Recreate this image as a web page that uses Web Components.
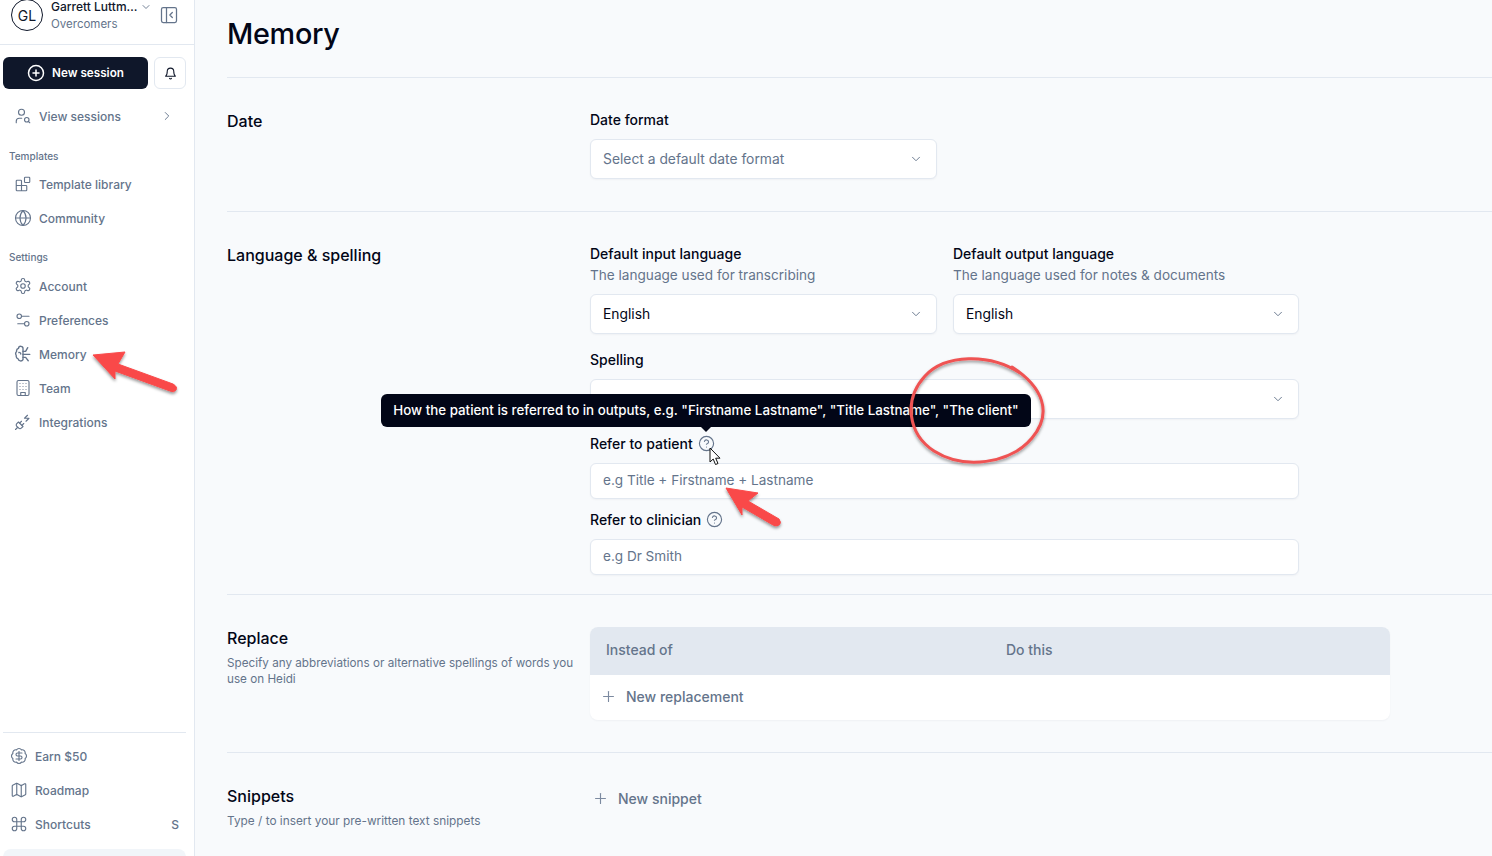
<!DOCTYPE html>
<html lang="en">
<head>
<meta charset="utf-8">
<title>Memory</title>
<style>
html,body{margin:0;padding:0;height:856px;overflow:hidden;background:#f8fafc;font-family:Inter,"Liberation Sans",sans-serif;color:#020617}
</style>
</head>
<body>
<app-shell>
  <side-bar slot="side"></side-bar>
  <page-title>Memory</page-title>
  <settings-section heading="Date" pad="33 32">
    <form-field label="Date format"><select-box placeholder text="Select a default date format"></select-box></form-field>
  </settings-section>
  <settings-section heading="Language &amp; spelling" pad="33 19">
    <form-field label="Default input language" hint="The language used for transcribing"><select-box text="English"></select-box></form-field>
    <form-field label="Default output language" hint="The language used for notes &amp; documents"><select-box text="English"></select-box></form-field>
    <form-field wide label="Spelling"><select-box text=""></select-box></form-field>
    <form-field wide help up label="Refer to patient"><text-box text="e.g Title + Firstname + Lastname"></text-box></form-field>
    <form-field wide help tight label="Refer to clinician"><text-box text="e.g Dr Smith"></text-box></form-field>
  </settings-section>
  <settings-section heading="Replace" hint="Specify any abbreviations or alternative spellings of words you use on Heidi" pad="32 32" top="1">
    <replace-table></replace-table>
  </settings-section>
  <settings-section heading="Snippets" hint="Type / to insert your pre-written text snippets" hintsize="11.85" pad="32 0" top="1" last>
    <add-row text="New snippet"></add-row>
  </settings-section>
  <page-annotations slot="over"></page-annotations>
</app-shell>
<script>
const ICONS={
 panel:'<rect x="3" y="3" width="18" height="18" rx="2"/><path d="M9 3v18"/><path d="m16 15-3-3 3-3"/>',
 bell:'<path d="M10.3 21a1.94 1.94 0 0 0 3.4 0"/><path d="M6 8a6 6 0 0 1 12 0c0 7 3 9 3 9H3s3-2 3-9"/>',
 plus:'<path d="M5 12h14"/><path d="M12 5v14"/>',
 circleplus:'<circle cx="12" cy="12" r="10"/><path d="M8 12h8"/><path d="M12 8v8"/>',
 usersearch:'<circle cx="10" cy="7" r="4"/><path d="M10.3 15H7a4 4 0 0 0-4 4v2"/><circle cx="17" cy="17" r="3"/><path d="m21 21-1.9-1.9"/>',
 blocks:'<rect x="14" y="3" width="7" height="7" rx="1"/><path d="M10 21V8a1 1 0 0 0-1-1H4a1 1 0 0 0-1 1v12a1 1 0 0 0 1 1h12a1 1 0 0 0 1-1v-5a1 1 0 0 0-1-1H3"/>',
 globe:'<circle cx="12" cy="12" r="10"/><path d="M12 2a14.5 14.5 0 0 0 0 20 14.5 14.5 0 0 0 0-20"/><path d="M2 12h20"/>',
 cog:'<path d="M12.22 2h-.44a2 2 0 0 0-2 2v.18a2 2 0 0 1-1 1.73l-.43.25a2 2 0 0 1-2 0l-.15-.08a2 2 0 0 0-2.73.73l-.22.38a2 2 0 0 0 .73 2.73l.15.1a2 2 0 0 1 1 1.72v.51a2 2 0 0 1-1 1.74l-.15.09a2 2 0 0 0-.73 2.73l.22.38a2 2 0 0 0 2.73.73l.15-.08a2 2 0 0 1 2 0l.43.25a2 2 0 0 1 1 1.73V20a2 2 0 0 0 2 2h.44a2 2 0 0 0 2-2v-.18a2 2 0 0 1 1-1.73l.43-.25a2 2 0 0 1 2 0l.15.08a2 2 0 0 0 2.73-.73l.22-.39a2 2 0 0 0-.73-2.73l-.15-.08a2 2 0 0 1-1-1.74v-.5a2 2 0 0 1 1-1.74l.15-.09a2 2 0 0 0 .73-2.73l-.22-.38a2 2 0 0 0-2.73-.73l-.15.08a2 2 0 0 1-2 0l-.43-.25a2 2 0 0 1-1-1.73V4a2 2 0 0 0-2-2z"/><circle cx="12" cy="12" r="3"/>',
 sliders:'<path d="M20 7h-9"/><path d="M14 17H5"/><circle cx="17" cy="17" r="3"/><circle cx="7" cy="7" r="3"/>',
 brain:'<path d="M12 5a3 3 0 0 0-6-.5 3.500 3.500 0 0 0-2.500 4A4.500 4.500 0 0 0 3 14a4 4 0 0 0 2.500 4.500 3.500 3.500 0 0 0 6.500 1V5"/><path d="M12 12.500h9"/><path d="M12 8.500h3.500l2.800-5"/><path d="M12 16.500h3.500l3.500 4.500"/><path d="M6.500 10a2 2 0 0 1 2.500 2"/>',
 building:'<rect x="4" y="2" width="16" height="20" rx="2"/><path d="M9 22v-4h6v4"/><path d="M8 6h.01M16 6h.01M12 6h.01M12 10h.01M12 14h.01M16 10h.01M16 14h.01M8 10h.01M8 14h.01"/>',
 plug:'<path d="M6.3 20.3a2.4 2.4 0 0 0 3.4 0L12 18l-6-6-2.3 2.3a2.4 2.4 0 0 0 0 3.4Z"/><path d="m2 22 3-3"/><path d="M7.5 13.5 10 11"/><path d="M10.5 16.5 13 14"/><path d="m18 3-4 4h6l-4 4"/>',
 dollar:'<path d="M3.85 8.62a4 4 0 0 1 4.78-4.77 4 4 0 0 1 6.74 0 4 4 0 0 1 4.78 4.78 4 4 0 0 1 0 6.74 4 4 0 0 1-4.77 4.78 4 4 0 0 1-6.75 0 4 4 0 0 1-4.78-4.77 4 4 0 0 1 0-6.76Z"/><path d="M16 8h-6a2 2 0 1 0 0 4h4a2 2 0 1 1 0 4H8"/><path d="M12 18V6"/>',
 map:'<path d="M14.106 5.553a2 2 0 0 0 1.788 0l3.659-1.83A1 1 0 0 1 21 4.619v12.764a1 1 0 0 1-.553.894l-4.553 2.277a2 2 0 0 1-1.788 0l-4.212-2.106a2 2 0 0 0-1.788 0l-3.659 1.83A1 1 0 0 1 3 19.381V6.618a1 1 0 0 1 .553-.894l4.553-2.277a2 2 0 0 1 1.788 0z"/><path d="M15 5.764v15"/><path d="M9 3.236v15"/>',
 command:'<path d="M15 6v12a3 3 0 1 0 3-3H6a3 3 0 1 0 3 3V6a3 3 0 1 0-3 3h12a3 3 0 1 0-3-3"/>',
 help:'<circle cx="12" cy="12" r="10"/><path d="M9.09 9a3 3 0 0 1 5.83 1c0 2-3 3-3 3"/><path d="M12 17h.01"/>',
 down:'<path d="m6 9 6 6 6-6"/>',
 right:'<path d="m9 18 6-6-6-6"/>'
};
function def(name,css,html,init){
  customElements.define(name,class extends HTMLElement{
    connectedCallback(){
      if(this.shadowRoot)return;
      const r=this.attachShadow({mode:'open'});
      r.innerHTML='<style>'+css+'</style>'+(typeof html==='function'?html(this):html);
      if(init)init(this,r);
    }
  });
}
const esc=s=>(s||'').replace(/&/g,'&amp;').replace(/</g,'&lt;');
def('x-icon',':host{display:inline-flex;flex:none;line-height:0}svg{display:block}',el=>{
  const s=el.getAttribute('size')||16,w=el.getAttribute('sw')||2;
  return `<svg width="${s}" height="${s}" viewBox="0 0 24 24" fill="none" stroke="currentColor" stroke-width="${w}" stroke-linecap="round" stroke-linejoin="round">${ICONS[el.getAttribute('name')]}</svg>`;
});
def('app-shell',`:host{display:flex;height:856px;overflow:hidden;position:relative}
 .main{flex:1;min-width:0;padding-left:32px;box-sizing:border-box;height:856px;overflow:hidden}`,
 '<slot name="side"></slot><div class="main"><slot></slot></div><slot name="over"></slot>');
def('nav-item',`:host{display:flex;align-items:center;height:34px;padding-left:var(--nav-pad,14px);padding-right:var(--nav-right,20px);gap:7px;color:#64748b;font-size:12px;font-weight:450}
 .t{flex:1;white-space:nowrap}.k{font-size:12px}`,
 el=>`<x-icon name="${el.getAttribute('icon')}" size="18" sw="${el.getAttribute('icon')==='brain'?1.8:1.5}"></x-icon><span class="t"><slot></slot></span>${el.hasAttribute('chev')?'<x-icon name="right" size="14" sw="1.6"></x-icon>':''}${el.getAttribute('key')?`<span class="k">${el.getAttribute('key')}</span>`:''}`);
def('side-label',':host{display:block;font-size:10px;font-weight:450;color:#64748b;padding-left:9px;height:13px;line-height:13px}','<slot></slot>');
def('side-bar',`:host{display:flex;flex-direction:column;width:195px;flex:none;height:856px;box-sizing:border-box;background:#fff;border-right:1px solid #e2e8f0;overflow:hidden}
 .head{height:45px;box-sizing:border-box;border-bottom:1px solid #e2e8f0;display:flex;align-items:flex-start;padding:0 0 0 11px;flex:none}
 .av{width:30px;height:30px;border:1px solid #0f172a;border-radius:50%;display:flex;align-items:center;justify-content:center;font-size:14px;color:#0f172a;margin-top:-1px;flex:none;background:#fff}
 .who{margin-left:8px;width:87px;flex:none;margin-top:-1px}
 .n{font-size:12px;font-weight:500;color:#0f172a;line-height:16px;white-space:nowrap}
 .o{font-size:11.5px;color:#64748b;line-height:16px;margin-top:1px}
 .cv{color:#64748b;margin:1px 0 0 2px}
 .pn{color:#64748b;margin:5px 0 0 7px}
 .act{display:flex;gap:6px;margin:12px 8px 0 3px;flex:none}
 .new{flex:1;height:32px;border-radius:6px;background:#0f172a;color:#fff;display:flex;align-items:center;justify-content:center;gap:7px;font-size:11.7px;font-weight:600}
 .bell{width:30px;height:30px;border:1px solid #e2e8f0;border-radius:6px;display:flex;align-items:center;justify-content:center;background:#fff;color:#0f172a;flex:none}
 .mt11{margin-top:10px}.lab{margin-top:17px;margin-bottom:4px}.lab2{margin-top:16px;margin-bottom:5px}
 .rule{height:1px;background:#e2e8f0;margin:auto 8px 6px 3px;flex:none}
 .foot{--nav-pad:10px;--nav-right:15px}
 .card{height:24px;margin:8px 8px -17px 3px;border-radius:8px;background:#f1f5f9;flex:none}`,
 `<div class="head"><div class="av">GL</div><div class="who"><div class="n">Garrett Luttm…</div><div class="o">Overcomers</div></div><x-icon class="cv" name="down" size="12" sw="1.8"></x-icon><x-icon class="pn" name="panel" size="20" sw="1.5"></x-icon></div>
 <div class="act"><div class="new"><x-icon name="circleplus" size="18" sw="2"></x-icon>New session</div><div class="bell"><x-icon name="bell" size="13" sw="2"></x-icon></div></div>
 <nav-item class="mt11" icon="usersearch" chev>View sessions</nav-item>
 <side-label class="lab">Templates</side-label>
 <nav-item icon="blocks">Template library</nav-item>
 <nav-item icon="globe">Community</nav-item>
 <side-label class="lab2">Settings</side-label>
 <nav-item icon="cog">Account</nav-item>
 <nav-item icon="sliders">Preferences</nav-item>
 <nav-item icon="brain">Memory</nav-item>
 <nav-item icon="building">Team</nav-item>
 <nav-item icon="plug">Integrations</nav-item>
 <div class="rule"></div>
 <div class="foot"><nav-item icon="dollar">Earn $50</nav-item><nav-item icon="map">Roadmap</nav-item><nav-item icon="command" key="S">Shortcuts</nav-item></div>
 <div class="card"></div>`);
def('page-title',`:host{display:block;height:78px;box-sizing:border-box;border-bottom:1px solid #e2e8f0;font-size:28.800px;font-weight:500;color:#020617;line-height:36px;padding-top:16px;letter-spacing:-.01em}`,'<slot></slot>');
def('settings-section',`:host{display:grid;grid-template-columns:347px 800px;column-gap:16px;box-sizing:border-box;border-bottom:1px solid #e2e8f0}
 :host([last]){border-bottom:0}
 .l{min-width:0}
 h2{margin:0;font-size:16px;font-weight:500;line-height:20px;color:#020617}
 p{margin:7px 0 0;font-size:11.7px;line-height:16px;color:#64748b}
 .r{display:grid;grid-template-columns:347px 346px;column-gap:16px;row-gap:17px;align-content:start}
 ::slotted(replace-table),::slotted(add-row){grid-column:1/-1}`,
 el=>{const h=el.getAttribute('hint'),z=el.getAttribute('hintsize');return `<div class="l"><h2>${esc(el.getAttribute('heading'))}</h2>${h?`<p${z?` style="font-size:${z}px"`:''}>${esc(h)}</p>`:''}</div><div class="r"><slot></slot></div>`},
 (el,r)=>{const [t,b]=(el.getAttribute('pad')||'32 32').split(' ');el.style.paddingTop=t+'px';el.style.paddingBottom=b+'px';
   r.querySelector('.l').style.paddingTop=(el.getAttribute('top')||0)+'px';});
def('form-field',`:host{display:block;min-width:0}
 :host([wide]){grid-column:1/-1}
 :host([tight]){margin-top:-5px}
 :host([up]){margin-top:-1px}
 .lb{display:flex;align-items:center;gap:5px;font-size:14px;font-weight:500;line-height:17px;color:#020617;height:17px}
 .h{font-size:13.600px;line-height:17px;color:#64748b;margin:5px 0 -1px}
 .lb x-icon{color:#64748b}
 .c{margin-top:11px}`,
 el=>`<div class="lb">${esc(el.getAttribute('label'))}${el.hasAttribute('help')?'<x-icon name="help" size="17" sw="1.6"></x-icon>':''}</div>${el.getAttribute('hint')?`<div class="h">${esc(el.getAttribute('hint'))}</div>`:''}<div class="c"><slot></slot></div>`);
def('select-box',`:host{display:flex;align-items:center;height:40px;box-sizing:border-box;background:#fff;border:1px solid #e2e8f0;border-radius:6px;padding:0 13px 0 12px;font-size:13.850px;color:#020617;box-shadow:0 1px 2px rgba(15,23,42,.04)}
 :host([placeholder]){color:#64748b}
 span{flex:1}x-icon{color:#64748b}`,
 el=>`<span>${esc(el.getAttribute('text'))}</span><x-icon name="down" size="14" sw="1.6"></x-icon>`);
def('text-box',`:host{display:flex;align-items:center;height:36px;box-sizing:border-box;background:#fff;border:1px solid #e2e8f0;border-radius:6px;padding:0 12px 2px;font-size:13.550px;color:#64748b;box-shadow:0 1px 2px rgba(15,23,42,.04)}`,
 el=>esc(el.getAttribute('text')));
def('replace-table',`:host{display:block;width:800px;border-radius:8px;overflow:hidden;background:#fff;box-shadow:0 1px 2px rgba(15,23,42,.04)}
 .h{display:grid;grid-template-columns:400px 400px;height:48px;box-sizing:border-box;padding-bottom:3px;align-items:center;background:#e2e8f0;color:#64748b;font-size:14px;font-weight:500}
 .h div{padding-left:16px}
 add-row{height:45px;box-sizing:border-box;padding:0 0 2px 10px}`,
 '<div class="h"><div>Instead of</div><div>Do this</div></div><add-row text="New replacement"></add-row>');
def('add-row',`:host{display:flex;align-items:center;gap:9px;padding-left:2px;height:26px;font-size:14px;font-weight:500;color:#64748b}
 x-icon{color:#7c8aa0}`,
 el=>`<x-icon name="plus" size="17" sw="1.6"></x-icon>${esc(el.getAttribute('text'))}`);
def('page-annotations',`:host{position:absolute;inset:0;pointer-events:none;display:block}
 svg{position:absolute;left:0;top:0}
 .tip{position:absolute;left:381px;top:394px;width:650px;height:33px;box-sizing:border-box;background:#020617;border-radius:6px;color:#fff;font-size:13.350px;font-weight:500;line-height:33px;text-align:center;white-space:nowrap}
 .tip:after{content:"";position:absolute;left:320px;top:33px;width:0;height:0;border:5px solid transparent;border-top-color:#020617;border-bottom:0}`,
 `<div class="tip">How the patient is referred to in outputs, e.g. "Firstname Lastname", "Title Lastname", "The client"</div>
 <svg width="1492" height="856" viewBox="0 0 1492 856" fill="none">
  <defs><filter id="s" x="-20%" y="-20%" width="140%" height="140%"><feDropShadow dx="0" dy="2" stdDeviation="1.6" flood-color="#000" flood-opacity=".4"/></filter></defs>
  <g filter="url(#s)">
   <path d="M93 355 125 352 118 364 173 384Q178 387 176 390 174 393 170 391L115 371 115 379Z" fill="#f94a4a" stroke="#f94a4a" stroke-linejoin="round"/>
   <path d="M726 488 758 493 748 501 779 519Q782 523 779 525 776 527 773 525L742 507 742 515Z" fill="#f94a4a" stroke="#f94a4a" stroke-linejoin="round"/>
   <path d="M1020 373C990 353 945 354 925 376 903 400 908 434 934 451 964 470 1010 464 1032 438 1053 413 1043 387 1012 367" stroke="#ef5353" stroke-width="3" stroke-linecap="round"/>
  </g>
  <path d="M710 448V462L713.2 459 715.5 464.500 718 463.500 715.7 458.200H720Z" fill="#fff" stroke="#111" stroke-width="1" stroke-linejoin="round"/>
 </svg>`);
</script>
</body>
</html>
